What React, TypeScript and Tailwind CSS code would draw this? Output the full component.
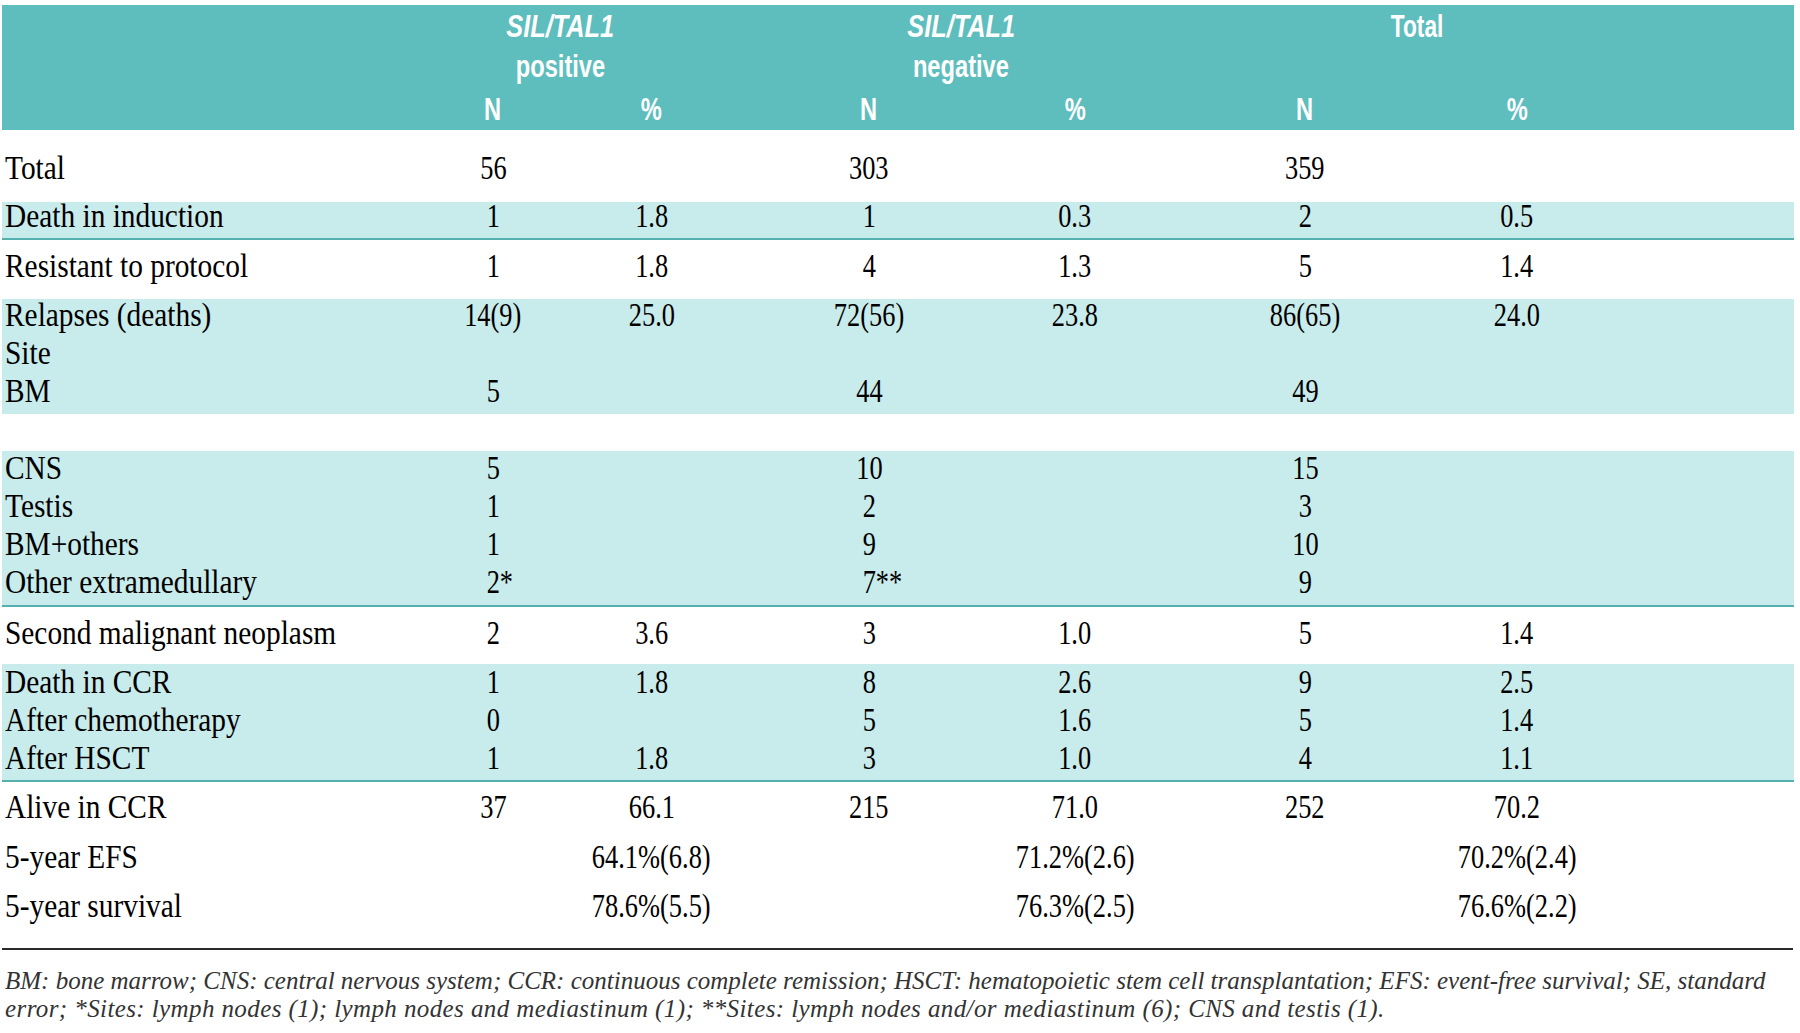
const GRID = "grid grid-cols-[410px_162px_155px_280px_132px_328px_96px]";

type Row = [string, ...React.ReactNode[]];

function Line({ row }: { row: Row }) {
  const [label, ...cells] = row;
  return (
    <div className={`${GRID} h-[28.5px] leading-[28.5px]`}>
      <div className="pl-[3px] whitespace-nowrap">
        <span className="inline-block origin-left scale-x-[0.89]">{label}</span>
      </div>
      {cells.map((c, i) => (
        <div key={i} className="flex justify-center whitespace-nowrap">
          <span className="inline-block scale-x-[0.8]">{c}</span>
        </div>
      ))}
    </div>
  );
}

function Star({ n, s }: { n: string; s: string }) {
  return (
    <>
      {n}
      <span className="inline-block w-0 whitespace-nowrap">{s}</span>
    </>
  );
}

function Band({ rows, className }: { rows: Row[]; className: string }) {
  return (
    <div className={`flex flex-col gap-[9.5px] bg-[#c8ebeb] ${className}`}>
      {rows.map((r, i) => (
        <Line key={i} row={r} />
      ))}
    </div>
  );
}

function GroupHead({ top, bottom }: { top: string; bottom: string }) {
  return (
    <div className="flex flex-col items-center whitespace-nowrap">
      <span className="inline-block scale-x-[0.79] italic">{top}</span>
      <span className="inline-block scale-x-[0.74]">{bottom}</span>
    </div>
  );
}

function Sub({ t }: { t: string }) {
  return (
    <div className="flex justify-center">
      <span className="inline-block scale-x-[0.74]">{t}</span>
    </div>
  );
}

export default function App() {
  return (
    <div className="w-[1800px] h-[1033px] overflow-hidden bg-white px-[2px] pt-[5px] font-['Liberation_Serif',serif] text-[33px] text-black">
      <div className="w-[1792px]">
        <div className="bg-[#5ebdbd] pt-[1px] pb-[1.5px] font-['Liberation_Sans',sans-serif] text-[32px] font-bold text-white">
          <div className="grid grid-cols-[447px_222px_580px_332px] leading-[40px]">
            <div />
            <GroupHead top="SIL/TAL1" bottom="positive" />
            <GroupHead top="SIL/TAL1" bottom="negative" />
            <div className="flex justify-center">
              <span className="inline-block scale-x-[0.71]">Total</span>
            </div>
          </div>
          <div className={`${GRID} mt-[2.5px] leading-[40px]`}>
            <div />
            <Sub t="N" />
            <Sub t="%" />
            <Sub t="N" />
            <Sub t="%" />
            <Sub t="N" />
            <Sub t="%" />
          </div>
        </div>

        <div className="mt-[24px]">
          <Line row={["Total", "56", "", "303", "", "359", ""]} />
        </div>

        <div className="mt-[19px] border-b-2 border-[#55b0b0] bg-[#c8ebeb] pb-[8px]">
          <Line row={["Death in induction", "1", "1.8", "1", "0.3", "2", "0.5"]} />
        </div>

        <div className="mt-[12px]">
          <Line row={["Resistant to protocol", "1", "1.8", "4", "1.3", "5", "1.4"]} />
        </div>

        <Band
          className="mt-[18px] pt-[2px] pb-[9px]"
          rows={[
            ["Relapses (deaths)", "14(9)", "25.0", "72(56)", "23.8", "86(65)", "24.0"],
            ["Site", "", "", "", "", "", ""],
            ["BM", "5", "", "44", "", "49", ""],
          ]}
        />

        <Band
          className="mt-[37px] pt-[2.5px] pb-[8.5px] border-b-2 border-[#55b0b0]"
          rows={[
            ["CNS", "5", "", "10", "", "15", ""],
            ["Testis", "1", "", "2", "", "3", ""],
            ["BM+others", "1", "", "9", "", "10", ""],
            ["Other extramedullary", <Star n="2" s="*" />, "", <Star n="7" s="**" />, "", "9", ""],
          ]}
        />

        <div className="mt-[12px]">
          <Line row={["Second malignant neoplasm", "2", "3.6", "3", "1.0", "5", "1.4"]} />
        </div>

        <Band
          className="mt-[17px] pt-[4px] pb-[7.5px] border-b-2 border-[#55b0b0]"
          rows={[
            ["Death in CCR", "1", "1.8", "8", "2.6", "9", "2.5"],
            ["After chemotherapy", "0", "", "5", "1.6", "5", "1.4"],
            ["After HSCT", "1", "1.8", "3", "1.0", "4", "1.1"],
          ]}
        />

        <div className="mt-[11px] flex flex-col gap-[21px]">
          <Line row={["Alive in CCR", "37", "66.1", "215", "71.0", "252", "70.2"]} />
          <Line row={["5-year EFS", "", "64.1%(6.8)", "", "71.2%(2.6)", "", "70.2%(2.4)"]} />
          <Line row={["5-year survival", "", "78.6%(5.5)", "", "76.3%(2.5)", "", "76.6%(2.2)"]} />
        </div>

        <div className="mt-[27px] h-[2px] w-[1791px] bg-[#2b2b2b]" />

        <div className="mt-[17px] pl-[3px] font-['Liberation_Serif',serif] text-[25px] italic leading-[28.5px] text-[#333] whitespace-nowrap">
          <div>
            BM: bone marrow; CNS: central nervous system; CCR: continuous complete remission; HSCT: hematopoietic stem cell
            transplantation; EFS: event-free survival; SE, standard
          </div>
          <div className="tracking-[0.4px]">
            error; *Sites: lymph nodes (1); lymph nodes and mediastinum (1); **Sites: lymph nodes and/or mediastinum (6); CNS and
            testis (1).
          </div>
        </div>
      </div>
    </div>
  );
}
